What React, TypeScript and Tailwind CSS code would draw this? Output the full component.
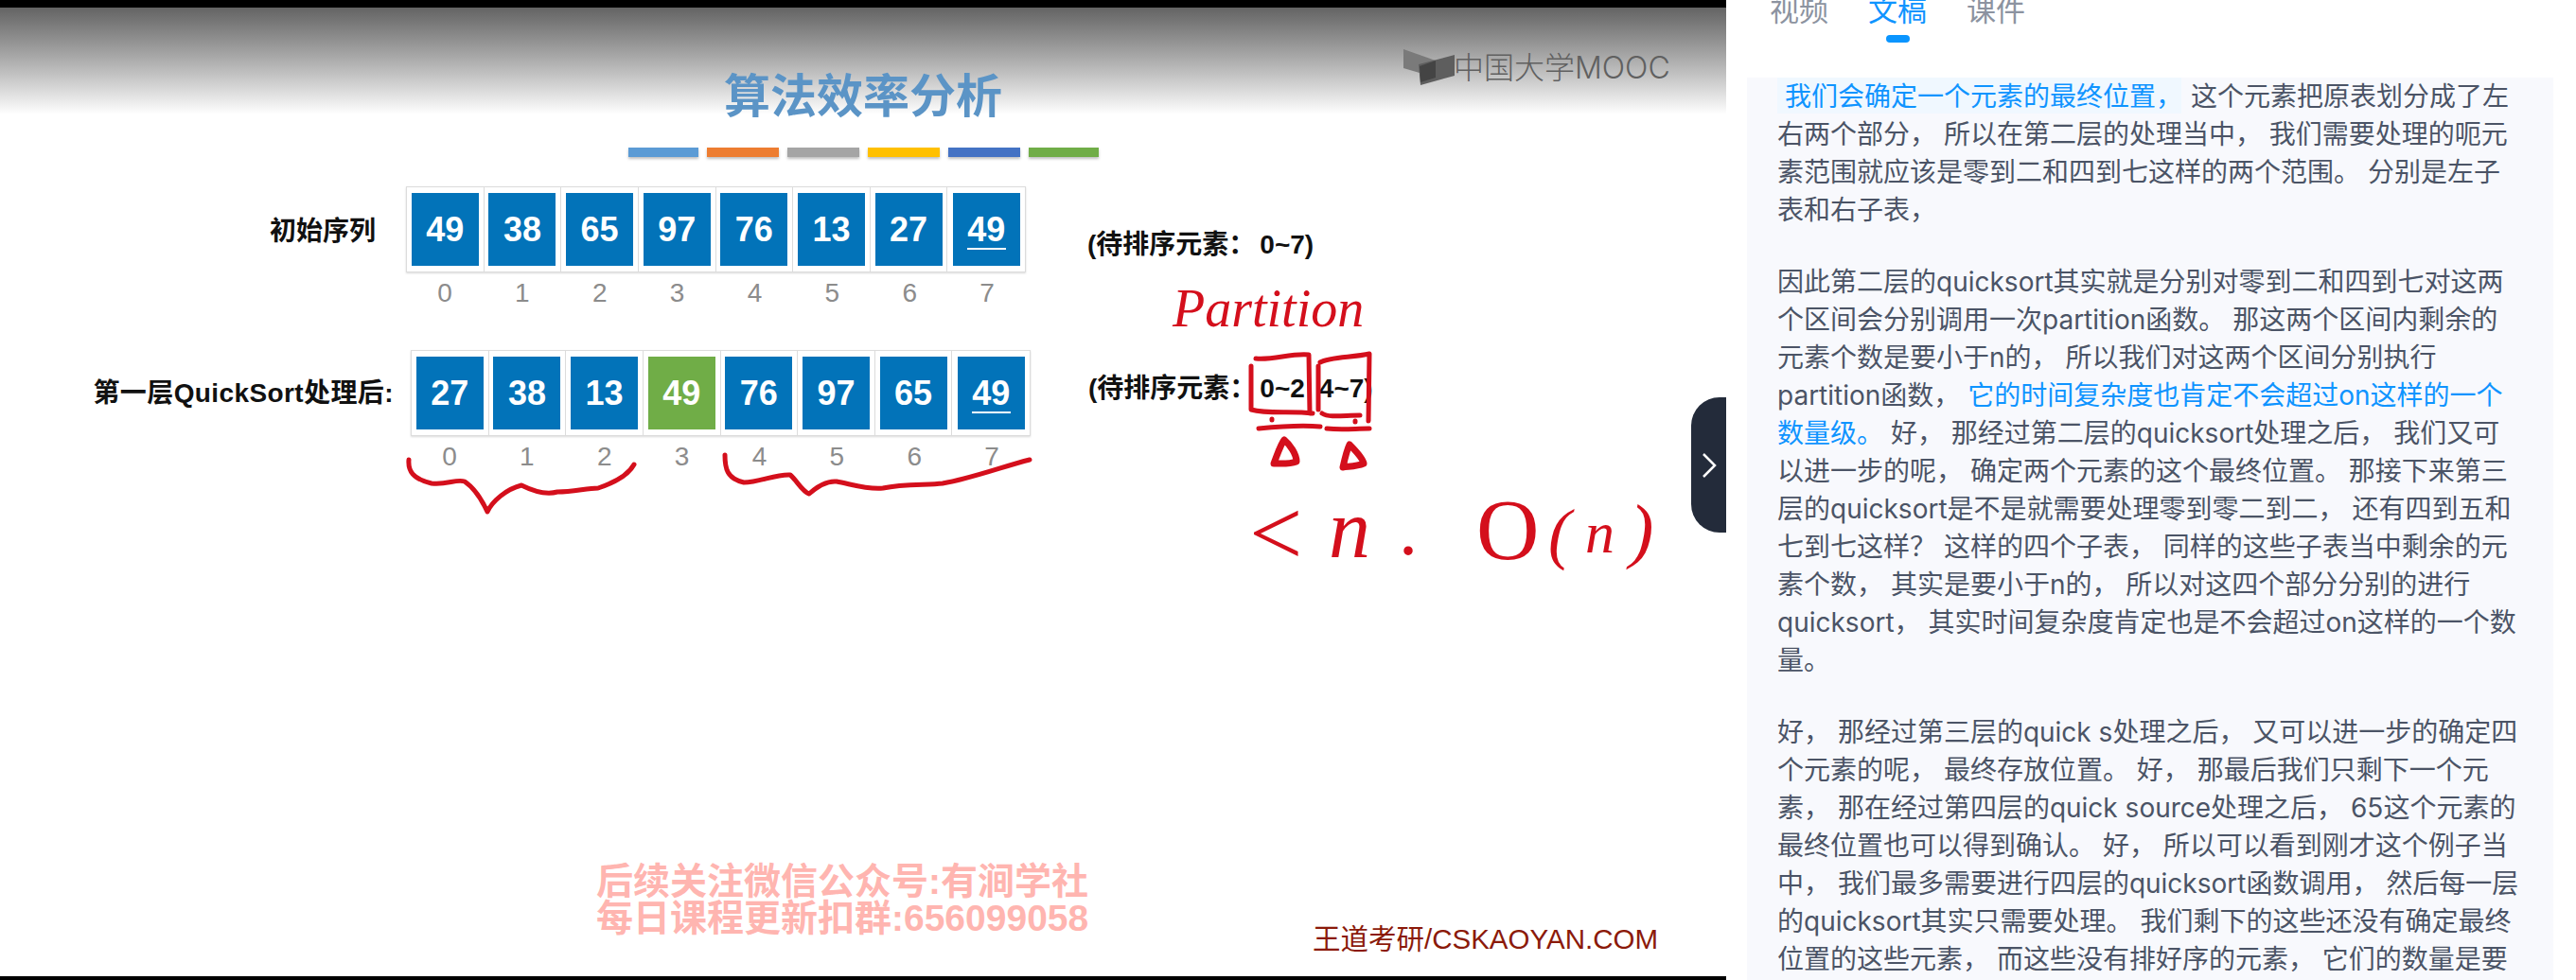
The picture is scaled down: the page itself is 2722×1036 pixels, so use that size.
const FIRST_ROW = [49, 38, 65, 97, 76, 13, 27, 49];
const SECOND_ROW = [27, 38, 13, 49, 76, 97, 65, 49];

type Part = { text: string; blue?: boolean };

const paragraphs: Part[][][] = [
  [
    [{ text: "这个元素把原表划分成了左" }],
    [{ text: "右两个部分， 所以在第二层的处理当中， 我们需要处理的呃元" }],
    [{ text: "素范围就应该是零到二和四到七这样的两个范围。 分别是左子" }],
    [{ text: "表和右子表，" }],
  ],
  [
    [{ text: "因此第二层的quicksort其实就是分别对零到二和四到七对这两" }],
    [{ text: "个区间会分别调用一次partition函数。 那这两个区间内剩余的" }],
    [{ text: "元素个数是要小于n的， 所以我们对这两个区间分别执行" }],
    [{ text: "partition函数， " }, { text: "它的时间复杂度也肯定不会超过on这样的一个", blue: true }],
    [{ text: "数量级。", blue: true }, { text: " 好， 那经过第二层的quicksort处理之后， 我们又可" }],
    [{ text: "以进一步的呢， 确定两个元素的这个最终位置。 那接下来第三" }],
    [{ text: "层的quicksort是不是就需要处理零到零二到二， 还有四到五和" }],
    [{ text: "七到七这样？ 这样的四个子表， 同样的这些子表当中剩余的元" }],
    [{ text: "素个数， 其实是要小于n的， 所以对这四个部分分别的进行" }],
    [{ text: "quicksort， 其实时间复杂度肯定也是不会超过on这样的一个数" }],
    [{ text: "量。" }],
  ],
  [
    [{ text: "好， 那经过第三层的quick s处理之后， 又可以进一步的确定四" }],
    [{ text: "个元素的呢， 最终存放位置。 好， 那最后我们只剩下一个元" }],
    [{ text: "素， 那在经过第四层的quick source处理之后， 65这个元素的" }],
    [{ text: "最终位置也可以得到确认。 好， 所以可以看到刚才这个例子当" }],
    [{ text: "中， 我们最多需要进行四层的quicksort函数调用， 然后每一层" }],
    [{ text: "的quicksort其实只需要处理。 我们剩下的这些还没有确定最终" }],
    [{ text: "位置的这些元素， 而这些没有排好序的元素， 它们的数量是要" }],
  ],
];

const BARS = [
  { w: "w-[74px]", color: "bg-[#5b9bd5]" },
  { w: "w-[76px]", color: "bg-[#ed7d31]" },
  { w: "w-[76px]", color: "bg-[#a5a5a5]" },
  { w: "w-[76px]", color: "bg-[#ffc000]" },
  { w: "w-[76px]", color: "bg-[#4472c4]" },
  { w: "w-[74px]", color: "bg-[#70ad47]" },
];

const Cells = ({ values, pivot }: { values: number[]; pivot?: number }) => {
  return (
    <div className="w-[655px]">
      <div className="grid grid-cols-8 border border-[#dcdcdc] h-[91px] shadow-[0_1px_2px_rgba(0,0,0,0.15)]">
        {values.map((value, i) => (
          <div key={i} className="flex items-center justify-center border-r border-[#dcdcdc] last:border-r-0">
            <div
              className={`relative w-[71px] h-[77px] flex items-center justify-center text-white text-[36px] font-bold ${
                i === pivot ? "bg-[#70ad47]" : "bg-[#0273b9]"
              }`}
            >
              {value}
              {i === 7 && <span className="absolute left-[15px] right-[15px] top-[58px] h-[2px] bg-white" />}
            </div>
          </div>
        ))}
      </div>
      <div className="grid grid-cols-8 mt-[9px] text-center text-[28px] leading-[26px] text-[#8c8c8c]">
        {values.map((_, i) => (
          <span key={i}>{i}</span>
        ))}
      </div>
    </div>
  );
};

const Strokes = () => {
  return (
    <svg
      className="absolute left-0 top-0"
      width="1824"
      height="1036"
      viewBox="0 0 1824 1036"
      fill="none"
      stroke="#d40f1c"
      strokeWidth="5"
      strokeLinecap="round"
      strokeLinejoin="round"
    >
      <path d="M432 486 C431 498 436 506 456 511 C472 513 482 506 491 509 C501 516 510 530 515 541 C520 530 535 517 551 513 C563 519 578 523 589 520 C606 520 620 516 632 516 C650 510 664 502 670 491" />
      <path d="M766 481 C766 495 768 506 786 510 C802 510 820 501 835 502 C842 508 848 520 855 522 C864 514 874 508 884 509 C900 512 918 518 933 516 C955 511 980 513 996 511 C1030 505 1060 493 1088 486" />
      <path d="M1327 379 C1345 381 1365 373 1383 375 L1384 437 M1322 387 L1322 433 C1340 438 1365 434 1387 437" />
      <path d="M1393 387 L1393 433 M1395 383 C1405 377 1430 378 1447 374 L1446 445 M1397 437 C1405 442 1420 439 1437 439" />
      <path d="M1330 453 C1350 451 1375 449 1395 451 M1402 453 C1418 455 1432 453 1447 453" />
      <path d="M1346 490 C1350 480 1353 470 1357 465 C1363 470 1370 480 1370 488 C1362 491 1353 490 1346 490 Z M1419 494 C1421 485 1423 476 1426 470 C1432 476 1440 484 1441 490 C1434 493 1426 493 1419 494 Z" strokeWidth="7" />
      <path d="M1344 443 L1344 444 M1432 445 L1432 446" />
    </svg>
  );
};

const Handwriting = () => {
  return (
    <div className="font-['Liberation_Serif',serif] italic text-[#d40f1c] leading-none">
      <span className="absolute left-[1239px] top-[298px] text-[56px]">Partition</span>
      <span className="absolute left-[1320px] top-[514px] text-[100px] not-italic">&lt;</span>
      <span className="absolute left-[1404px] top-[516px] text-[88px]">n</span>
      <span className="absolute left-[1478px] top-[519px] text-[80px] not-italic">.</span>
      <span className="absolute left-[1560px] top-[514px] text-[92px] not-italic">O</span>
      <span className="absolute left-[1636px] top-[528px] text-[72px]">(</span>
      <span className="absolute left-[1675px] top-[532px] text-[62px]">n</span>
      <span className="absolute left-[1722px] top-[522px] text-[76px]">)</span>
    </div>
  );
};

const VideoPanel = () => {
  return (
    <div className="relative w-[1824px] h-[1036px] shrink-0 flex flex-col bg-white overflow-hidden font-['Liberation_Sans','Noto_Sans_CJK_SC',sans-serif]">
      <div className="absolute left-0 right-0 top-[8px] h-[113px] bg-gradient-to-b from-[#646464] to-white" />
      <div className="relative h-[8px] bg-black shrink-0" />

      <div className="absolute left-[1483px] top-[50px] flex items-center">
        <svg width="54" height="44" viewBox="0 0 54 44">
          <path d="M0 2 L34 14 L34 32 L0 22 Z" fill="#7a7a7a" />
          <path d="M16 18 L54 8 L54 30 L18 40 Z" fill="#5e5e5e" />
          <path d="M17 20 L34 14 L34 32 L18 37 Z" fill="#444444" />
        </svg>
        <span className="ml-[-1px] text-[32px] leading-none text-[#606060] font-['Inter','Noto_Sans_CJK_SC',sans-serif] font-light">
          中国大学MOOC
        </span>
      </div>

      <h1 className="relative mt-[69px] h-[50px] text-center text-[49px] leading-[50px] font-bold text-[#5b94c6]">
        算法效率分析
      </h1>
      <div className="relative mt-[29px] flex justify-center gap-[9px]">
        {BARS.map((bar, i) => (
          <div key={i} className={`h-[10px] ${bar.w} ${bar.color} shadow-[0_2px_3px_rgba(0,0,0,0.25)]`} />
        ))}
      </div>

      <div className="flex mt-[31px]">
        <div className="w-[397px] h-[91px] pt-[4px] flex items-center justify-end text-[28px] font-bold text-[#111]">初始序列</div>
        <div className="ml-[32px]">
          <Cells values={FIRST_ROW} />
        </div>
        <div className="ml-[65px] h-[124px] flex items-center text-[28px] font-bold text-[#111] whitespace-nowrap">
          (待排序元素：
          <span className="ml-[5px]">0~7)</span>
        </div>
      </div>

      <div className="flex mt-[47px]">
        <div className="w-[416px] h-[91px] flex items-center justify-end text-[28px] tracking-[0.4px] font-bold text-[#111] whitespace-nowrap">
          第一层QuickSort处理后:
        </div>
        <div className="ml-[18px]">
          <Cells values={SECOND_ROW} pivot={3} />
        </div>
        <div className="ml-[61px] h-[82px] flex items-center text-[28px] font-bold text-[#111] whitespace-nowrap">
          (待排序元素：
          <span className="ml-[4px]">0~2</span>
          <span className="ml-[15px]">4~7)</span>
        </div>
      </div>

      <div className="ml-[630px] mt-[416px] text-[39px] leading-[39px] font-bold text-[#ffb5b0] whitespace-nowrap">
        <div>后续关注微信公众号:有涧学社</div>
        <div>每日课程更新扣群:656099058</div>
      </div>

      <div className="absolute left-[1387px] top-[976px] text-[29.5px] leading-[34px] text-[#8b1a0a] whitespace-nowrap">
        王道考研/CSKAOYAN.COM
      </div>

      <div className="absolute left-0 right-0 bottom-0 h-[4px] bg-black" />
      <Strokes />
      <Handwriting />

      <button className="absolute right-0 top-[420px] w-[37px] h-[143px] rounded-l-[30px] bg-[#232b3a] flex items-center justify-center">
        <svg width="16" height="28" viewBox="0 0 16 28" fill="none" stroke="white" strokeWidth="2.5">
          <path d="M2 2 L14 14 L2 26" />
        </svg>
      </button>
    </div>
  );
};

const TextLine = ({ parts }: { parts: Part[] }) => {
  return (
    <div className="whitespace-pre">
      {parts.map((part, i) => (
        <span key={i} className={part.blue ? "text-[#0f94ff]" : ""}>
          {part.text}
        </span>
      ))}
    </div>
  );
};

const TranscriptPanel = () => {
  return (
    <div className="flex-1 h-[1036px] overflow-hidden bg-white font-['Inter','Noto_Sans_CJK_SC',sans-serif]">
      <div className="flex gap-[42px] pl-[46px] h-[82px] -mt-[10px] text-[31px] leading-[42px] text-[#8c93a0]">
        <span>视频</span>
        <span className="relative text-[#0f94ff]">
          文稿
          <span className="absolute left-[19px] top-[47px] w-[25px] h-[8px] rounded-full bg-[#0a95ff]" />
        </span>
        <span>课件</span>
      </div>
      <div className="mt-[10px] ml-[22px] w-[852px] h-[960px] bg-[#f8f9fd] pl-[32px] text-[28px] leading-[40px] text-[#4b5466]">
        {paragraphs.map((lines, p) => (
          <div key={p} className={p > 0 ? "mt-[36px]" : ""}>
            {lines.map((parts, i) =>
              p === 0 && i === 0 ? (
                <div key={i} className="flex h-[40px]">
                  <span className="bg-[#f0f8ff] text-[#0f94ff] pl-[8px] h-[38px] w-[427px] whitespace-nowrap">我们会确定一个元素的最终位置，</span>
                  <span className="ml-[10px] whitespace-nowrap">这个元素把原表划分成了左</span>
                </div>
              ) : (
                <TextLine key={i} parts={parts} />
              )
            )}
          </div>
        ))}
      </div>
    </div>
  );
};

export default function App() {
  return (
    <div className="flex w-[2722px] h-[1036px] overflow-hidden bg-white">
      <VideoPanel />
      <TranscriptPanel />
    </div>
  );
}
